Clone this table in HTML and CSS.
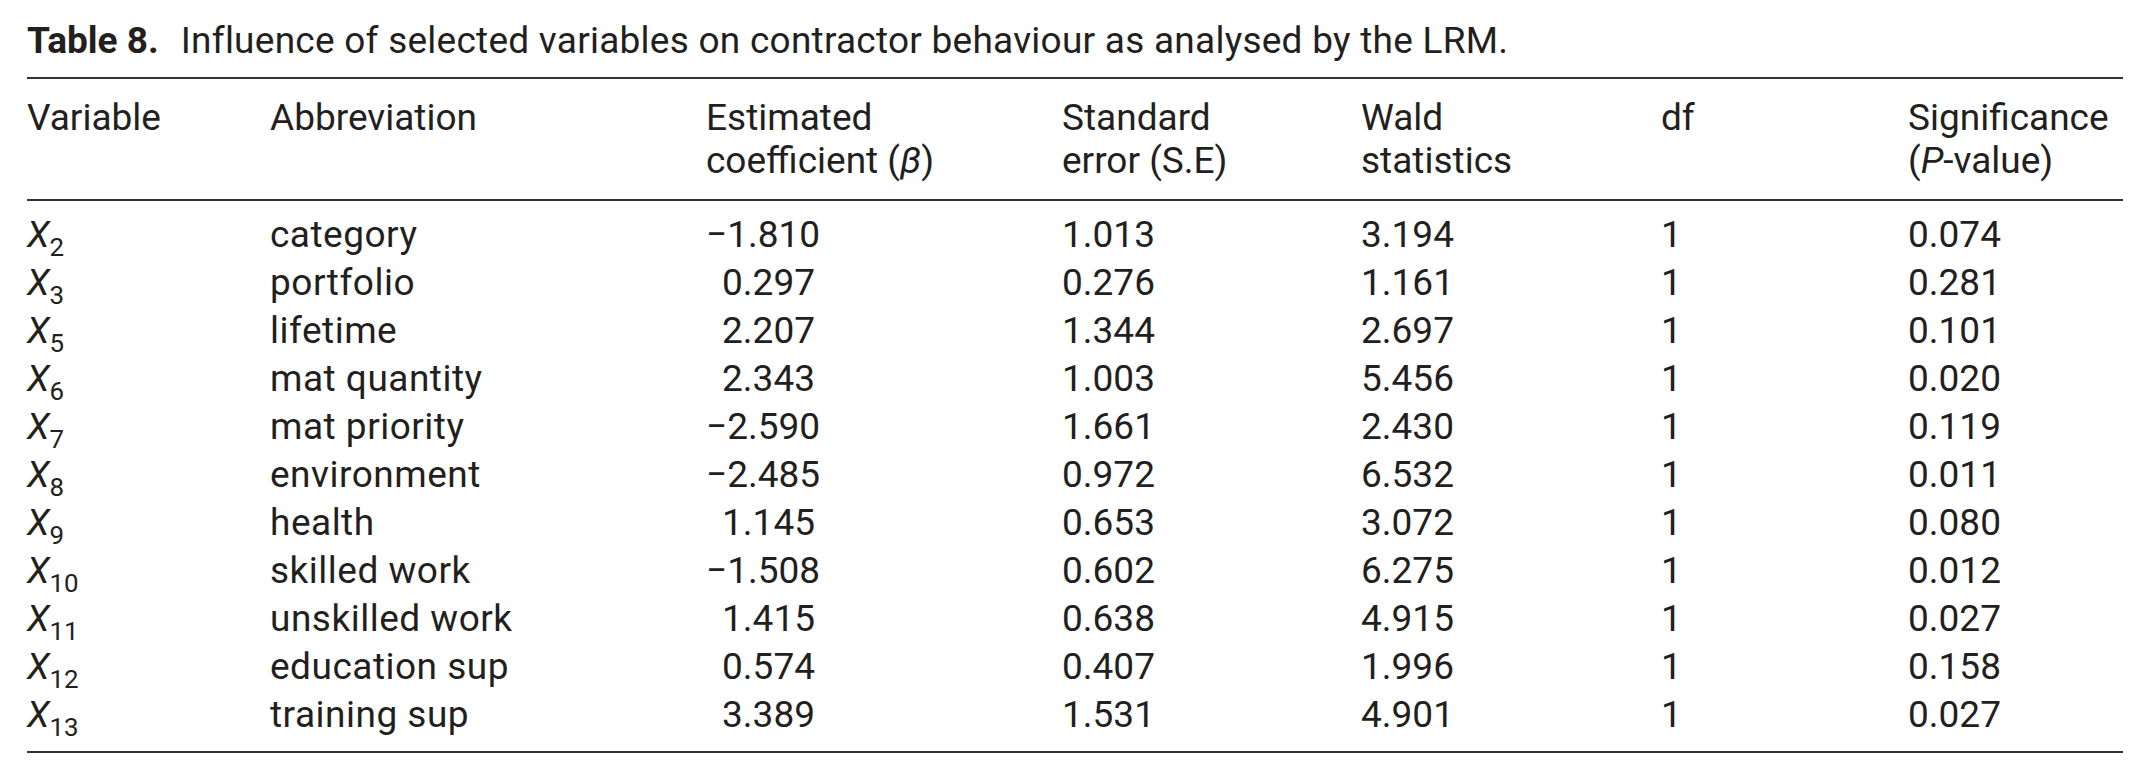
FILE: index.html
```html
<!DOCTYPE html>
<html lang="en">
<head>
<meta charset="utf-8">
<title>Table 8</title>
<link rel="stylesheet" href="styles.css">
</head>
<body>
<div class="page">
  <p class="caption"><span class="label">Table 8.</span><span class="caption-text">Influence of selected variables on contractor behaviour as analysed by the LRM.</span></p>
  <table class="data">
    <colgroup>
      <col class="c1"><col class="c2"><col class="c3"><col class="c4"><col class="c5"><col class="c6"><col class="c7">
    </colgroup>
    <thead>
      <tr>
        <th>Variable</th>
        <th>Abbreviation</th>
        <th>Estimated<br>coefficient (<i>β</i>)</th>
        <th>Standard<br>error (S.E)</th>
        <th>Wald<br>statistics</th>
        <th>df</th>
        <th>Significance<br>(<i>P</i>-value)</th>
      </tr>
    </thead>
    <tbody>
      <tr><td><i>X</i><sub>2</sub></td><td class="abbr">category</td><td><span class="num">−1.810</span></td><td>1.013</td><td>3.194</td><td>1</td><td>0.074</td></tr>
      <tr><td><i>X</i><sub>3</sub></td><td class="abbr">portfolio</td><td><span class="num">0.297</span></td><td>0.276</td><td>1.161</td><td>1</td><td>0.281</td></tr>
      <tr><td><i>X</i><sub>5</sub></td><td class="abbr">lifetime</td><td><span class="num">2.207</span></td><td>1.344</td><td>2.697</td><td>1</td><td>0.101</td></tr>
      <tr><td><i>X</i><sub>6</sub></td><td class="abbr">mat quantity</td><td><span class="num">2.343</span></td><td>1.003</td><td>5.456</td><td>1</td><td>0.020</td></tr>
      <tr><td><i>X</i><sub>7</sub></td><td class="abbr">mat priority</td><td><span class="num">−2.590</span></td><td>1.661</td><td>2.430</td><td>1</td><td>0.119</td></tr>
      <tr><td><i>X</i><sub>8</sub></td><td class="abbr">environment</td><td><span class="num">−2.485</span></td><td>0.972</td><td>6.532</td><td>1</td><td>0.011</td></tr>
      <tr><td><i>X</i><sub>9</sub></td><td class="abbr">health</td><td><span class="num">1.145</span></td><td>0.653</td><td>3.072</td><td>1</td><td>0.080</td></tr>
      <tr><td><i>X</i><sub>10</sub></td><td class="abbr">skilled work</td><td><span class="num">−1.508</span></td><td>0.602</td><td>6.275</td><td>1</td><td>0.012</td></tr>
      <tr><td><i>X</i><sub>11</sub></td><td class="abbr">unskilled work</td><td><span class="num">1.415</span></td><td>0.638</td><td>4.915</td><td>1</td><td>0.027</td></tr>
      <tr><td><i>X</i><sub>12</sub></td><td class="abbr">education sup</td><td><span class="num">0.574</span></td><td>0.407</td><td>1.996</td><td>1</td><td>0.158</td></tr>
      <tr><td><i>X</i><sub>13</sub></td><td class="abbr">training sup</td><td><span class="num">3.389</span></td><td>1.531</td><td>4.901</td><td>1</td><td>0.027</td></tr>
    </tbody>
  </table>
</div>
</body>
</html>
```

FILE: styles.css
```css
html, body {
  margin: 0;
  padding: 0;
  background: #ffffff;
}

body {
  font-family: Roboto, "Liberation Sans", sans-serif;
  color: #231f20;
}

.page {
  padding: 17px 26px 0 27px;
}

.caption {
  margin: 0 0 12px 0;
  font-size: 37px;
  line-height: 48px;
  white-space: nowrap;
}

.label {
  font-weight: 700;
  margin-right: 22px;
}

.caption-text {
  letter-spacing: 0.25px;
}

.data {
  width: 2096px;
  border-collapse: collapse;
  table-layout: fixed;
  font-size: 37px;
  border-top: 2px solid #333;
  border-bottom: 2px solid #333;
}

.c1 { width: 243px; }
.c2 { width: 436px; }
.c3 { width: 356px; }
.c4 { width: 299px; }
.c5 { width: 300px; }
.c6 { width: 247px; }
.c7 { width: 215px; }

.data th {
  font-weight: 400;
  text-align: left;
  vertical-align: top;
  line-height: 43px;
  padding: 17px 0 17px 0;
  border-bottom: 2px solid #333;
}

.data td {
  padding: 0;
  line-height: 48px;
  height: 48px;
  text-align: left;
  vertical-align: middle;
  white-space: nowrap;
}

.data td.abbr {
  letter-spacing: 0.5px;
}

.data tbody tr:first-child td {
  padding-top: 10px;
}

.data tbody tr:last-child td {
  padding-bottom: 12px;
}

.data i {
  font-style: italic;
}

.data sub {
  font-size: 0.7em;
  line-height: 0;
  vertical-align: -0.36em;
}

.num {
  display: inline-block;
  width: 109px;
  text-align: right;
}
```
